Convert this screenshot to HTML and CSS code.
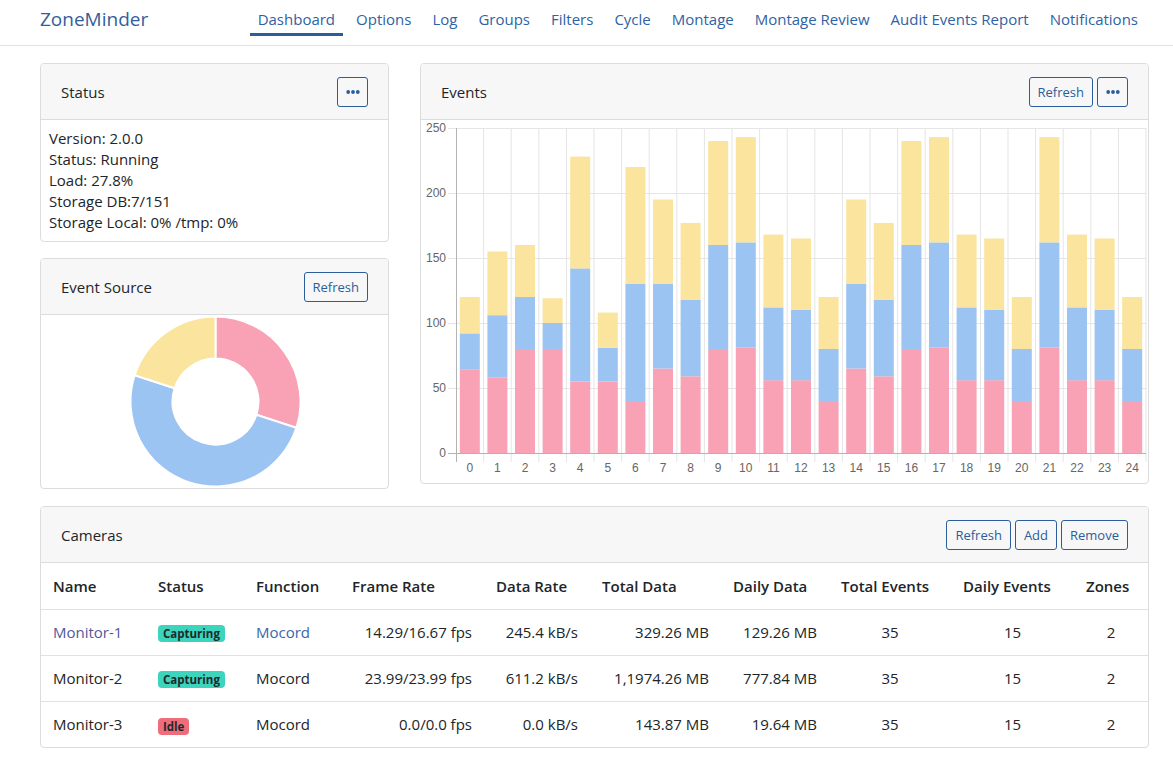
FILE: index.html
```html
<!DOCTYPE html>
<html lang="en">
<head>
<meta charset="utf-8">
<title>ZoneMinder Dashboard</title>
<link rel="stylesheet" href="styles.css">
</head>
<body>
<header class="navbar">
  <a class="brand" href="#">ZoneMinder</a>
  <nav class="nav">
    <a class="nav-link active" href="#">Dashboard</a>
    <a class="nav-link" href="#">Options</a>
    <a class="nav-link" href="#">Log</a>
    <a class="nav-link" href="#">Groups</a>
    <a class="nav-link" href="#">Filters</a>
    <a class="nav-link" href="#">Cycle</a>
    <a class="nav-link" href="#">Montage</a>
    <a class="nav-link" href="#">Montage Review</a>
    <a class="nav-link" href="#">Audit Events Report</a>
    <a class="nav-link" href="#">Notifications</a>
  </nav>
</header>

<main class="content">
  <div class="top-row">
    <div class="left-col">
      <section class="card">
        <div class="card-header">
          <span class="card-title">Status</span>
          <div class="btns">
            <button class="btn btn-icon" type="button"><svg width="14" height="4" viewBox="0 0 14 4"><circle cx="2.2" cy="2" r="1.9" fill="#2c5d9b"/><circle cx="7" cy="2" r="1.9" fill="#2c5d9b"/><circle cx="11.8" cy="2" r="1.9" fill="#2c5d9b"/></svg></button>
          </div>
        </div>
        <div class="status-body">
          <div>Version: 2.0.0</div>
          <div>Status: Running</div>
          <div>Load: 27.8%</div>
          <div>Storage DB:7/151</div>
          <div>Storage Local: 0% /tmp: 0%</div>
        </div>
      </section>

      <section class="card">
        <div class="card-header">
          <span class="card-title">Event Source</span>
          <div class="btns">
            <button class="btn" type="button">Refresh</button>
          </div>
        </div>
        <div class="donut-body">
          <svg class="donut" width="347" height="173" viewBox="0 0 347 173">
            <path d="M174.5,1.5 A85,85 0 0 1 255.34,112.77 L215.40,99.79 A43,43 0 0 0 174.5,43.5 Z" fill="#f9a1b5" stroke="#fff" stroke-width="2"/>
            <path d="M255.34,112.77 A85,85 0 1 1 93.66,60.23 L133.60,73.21 A43,43 0 1 0 215.40,99.79 Z" fill="#9cc4f2" stroke="#fff" stroke-width="2"/>
            <path d="M93.66,60.23 A85,85 0 0 1 174.5,1.5 L174.5,43.5 A43,43 0 0 0 133.60,73.21 Z" fill="#fbe49d" stroke="#fff" stroke-width="2"/>
          </svg>
        </div>
      </section>
    </div>

    <section class="card events-card">
      <div class="card-header">
        <span class="card-title">Events</span>
        <div class="btns">
          <button class="btn" type="button">Refresh</button>
          <button class="btn btn-icon" type="button"><svg width="14" height="4" viewBox="0 0 14 4"><circle cx="2.2" cy="2" r="1.9" fill="#2c5d9b"/><circle cx="7" cy="2" r="1.9" fill="#2c5d9b"/><circle cx="11.8" cy="2" r="1.9" fill="#2c5d9b"/></svg></button>
        </div>
      </div>
      <div class="chart-body">
        <svg class="bar-chart" width="727" height="363" viewBox="0 0 727 363">
          <g stroke="#e5e5e5" stroke-width="1">
            <line x1="27" y1="8.5" x2="725" y2="8.5"/>
            <line x1="27" y1="73.5" x2="725" y2="73.5"/>
            <line x1="27" y1="138.5" x2="725" y2="138.5"/>
            <line x1="27" y1="203.5" x2="725" y2="203.5"/>
            <line x1="27" y1="268.5" x2="725" y2="268.5"/>
            <line x1="62.6" y1="8" x2="62.6" y2="342"/>
            <line x1="90.2" y1="8" x2="90.2" y2="342"/>
            <line x1="117.8" y1="8" x2="117.8" y2="342"/>
            <line x1="145.4" y1="8" x2="145.4" y2="342"/>
            <line x1="173" y1="8" x2="173" y2="342"/>
            <line x1="200.6" y1="8" x2="200.6" y2="342"/>
            <line x1="228.2" y1="8" x2="228.2" y2="342"/>
            <line x1="255.8" y1="8" x2="255.8" y2="342"/>
            <line x1="283.4" y1="8" x2="283.4" y2="342"/>
            <line x1="311" y1="8" x2="311" y2="342"/>
            <line x1="338.6" y1="8" x2="338.6" y2="342"/>
            <line x1="366.2" y1="8" x2="366.2" y2="342"/>
            <line x1="393.8" y1="8" x2="393.8" y2="342"/>
            <line x1="421.4" y1="8" x2="421.4" y2="342"/>
            <line x1="449" y1="8" x2="449" y2="342"/>
            <line x1="476.6" y1="8" x2="476.6" y2="342"/>
            <line x1="504.2" y1="8" x2="504.2" y2="342"/>
            <line x1="531.8" y1="8" x2="531.8" y2="342"/>
            <line x1="559.4" y1="8" x2="559.4" y2="342"/>
            <line x1="587" y1="8" x2="587" y2="342"/>
            <line x1="614.6" y1="8" x2="614.6" y2="342"/>
            <line x1="642.2" y1="8" x2="642.2" y2="342"/>
            <line x1="669.8" y1="8" x2="669.8" y2="342"/>
            <line x1="697.4" y1="8" x2="697.4" y2="342"/>
            <line x1="725" y1="8" x2="725" y2="342"/>
          </g>
          <g transform="translate(0 333) scale(1 -1.3)">
            <g fill="#f9a1b5">
              <rect x="38.8" y="0" width="20" height="64"/>
              <rect x="66.4" y="0" width="20" height="58"/>
              <rect x="94" y="0" width="20" height="80"/>
              <rect x="121.6" y="0" width="20" height="80"/>
              <rect x="149.2" y="0" width="20" height="55"/>
              <rect x="176.8" y="0" width="20" height="55"/>
              <rect x="204.4" y="0" width="20" height="40"/>
              <rect x="232" y="0" width="20" height="65"/>
              <rect x="259.6" y="0" width="20" height="59"/>
              <rect x="287.2" y="0" width="20" height="80"/>
              <rect x="314.8" y="0" width="20" height="81"/>
              <rect x="342.4" y="0" width="20" height="56"/>
              <rect x="370" y="0" width="20" height="56"/>
              <rect x="397.6" y="0" width="20" height="40"/>
              <rect x="425.2" y="0" width="20" height="65"/>
              <rect x="452.8" y="0" width="20" height="59"/>
              <rect x="480.4" y="0" width="20" height="80"/>
              <rect x="508" y="0" width="20" height="81"/>
              <rect x="535.6" y="0" width="20" height="56"/>
              <rect x="563.2" y="0" width="20" height="56"/>
              <rect x="590.8" y="0" width="20" height="40"/>
              <rect x="618.4" y="0" width="20" height="81"/>
              <rect x="646" y="0" width="20" height="56"/>
              <rect x="673.6" y="0" width="20" height="56"/>
              <rect x="701.2" y="0" width="20" height="40"/>
            </g>
            <g fill="#9cc4f2">
              <rect x="38.8" y="64" width="20" height="28"/>
              <rect x="66.4" y="58" width="20" height="48"/>
              <rect x="94" y="80" width="20" height="40"/>
              <rect x="121.6" y="80" width="20" height="20"/>
              <rect x="149.2" y="55" width="20" height="87"/>
              <rect x="176.8" y="55" width="20" height="26"/>
              <rect x="204.4" y="40" width="20" height="90"/>
              <rect x="232" y="65" width="20" height="65"/>
              <rect x="259.6" y="59" width="20" height="59"/>
              <rect x="287.2" y="80" width="20" height="80"/>
              <rect x="314.8" y="81" width="20" height="81"/>
              <rect x="342.4" y="56" width="20" height="56"/>
              <rect x="370" y="56" width="20" height="54"/>
              <rect x="397.6" y="40" width="20" height="40"/>
              <rect x="425.2" y="65" width="20" height="65"/>
              <rect x="452.8" y="59" width="20" height="59"/>
              <rect x="480.4" y="80" width="20" height="80"/>
              <rect x="508" y="81" width="20" height="81"/>
              <rect x="535.6" y="56" width="20" height="56"/>
              <rect x="563.2" y="56" width="20" height="54"/>
              <rect x="590.8" y="40" width="20" height="40"/>
              <rect x="618.4" y="81" width="20" height="81"/>
              <rect x="646" y="56" width="20" height="56"/>
              <rect x="673.6" y="56" width="20" height="54"/>
              <rect x="701.2" y="40" width="20" height="40"/>
            </g>
            <g fill="#fbe49d">
              <rect x="38.8" y="92" width="20" height="28"/>
              <rect x="66.4" y="106" width="20" height="49"/>
              <rect x="94" y="120" width="20" height="40"/>
              <rect x="121.6" y="100" width="20" height="19"/>
              <rect x="149.2" y="142" width="20" height="86"/>
              <rect x="176.8" y="81" width="20" height="27"/>
              <rect x="204.4" y="130" width="20" height="90"/>
              <rect x="232" y="130" width="20" height="65"/>
              <rect x="259.6" y="118" width="20" height="59"/>
              <rect x="287.2" y="160" width="20" height="80"/>
              <rect x="314.8" y="162" width="20" height="81"/>
              <rect x="342.4" y="112" width="20" height="56"/>
              <rect x="370" y="110" width="20" height="55"/>
              <rect x="397.6" y="80" width="20" height="40"/>
              <rect x="425.2" y="130" width="20" height="65"/>
              <rect x="452.8" y="118" width="20" height="59"/>
              <rect x="480.4" y="160" width="20" height="80"/>
              <rect x="508" y="162" width="20" height="81"/>
              <rect x="535.6" y="112" width="20" height="56"/>
              <rect x="563.2" y="110" width="20" height="55"/>
              <rect x="590.8" y="80" width="20" height="40"/>
              <rect x="618.4" y="162" width="20" height="81"/>
              <rect x="646" y="112" width="20" height="56"/>
              <rect x="673.6" y="110" width="20" height="55"/>
              <rect x="701.2" y="80" width="20" height="40"/>
            </g>
          </g>
          <g stroke="#b3b3b3" stroke-width="1">
            <line x1="35.5" y1="8" x2="35.5" y2="342"/>
            <line x1="27" y1="333.5" x2="725" y2="333.5"/>
          </g>
          <g class="axis-text" text-anchor="end">
            <text x="25" y="12">250</text>
            <text x="25" y="77">200</text>
            <text x="25" y="142">150</text>
            <text x="25" y="207">100</text>
            <text x="25" y="272">50</text>
            <text x="25" y="337">0</text>
          </g>
          <g class="axis-text" text-anchor="middle">
            <text x="48.8" y="352">0</text>
            <text x="76.4" y="352">1</text>
            <text x="104" y="352">2</text>
            <text x="131.6" y="352">3</text>
            <text x="159.2" y="352">4</text>
            <text x="186.8" y="352">5</text>
            <text x="214.4" y="352">6</text>
            <text x="242" y="352">7</text>
            <text x="269.6" y="352">8</text>
            <text x="297.2" y="352">9</text>
            <text x="324.8" y="352">10</text>
            <text x="352.4" y="352">11</text>
            <text x="380" y="352">12</text>
            <text x="407.6" y="352">13</text>
            <text x="435.2" y="352">14</text>
            <text x="462.8" y="352">15</text>
            <text x="490.4" y="352">16</text>
            <text x="518" y="352">17</text>
            <text x="545.6" y="352">18</text>
            <text x="573.2" y="352">19</text>
            <text x="600.8" y="352">20</text>
            <text x="628.4" y="352">21</text>
            <text x="656" y="352">22</text>
            <text x="683.6" y="352">23</text>
            <text x="711.2" y="352">24</text>
          </g>
        </svg>
      </div>
    </section>
  </div>

  <section class="card cameras-card">
    <div class="card-header">
      <span class="card-title">Cameras</span>
      <div class="btns">
        <button class="btn" type="button">Refresh</button>
        <button class="btn" type="button">Add</button>
        <button class="btn" type="button">Remove</button>
      </div>
    </div>
    <table class="cam-table">
      <colgroup>
        <col class="c-name"><col class="c-status"><col class="c-func"><col class="c-fps"><col class="c-rate">
        <col class="c-total"><col class="c-daily"><col class="c-tev"><col class="c-dev"><col class="c-zones">
      </colgroup>
      <thead>
        <tr>
          <th>Name</th><th>Status</th><th>Function</th><th>Frame Rate</th><th>Data Rate</th>
          <th>Total Data</th><th>Daily Data</th><th>Total Events</th><th>Daily Events</th><th>Zones</th>
        </tr>
      </thead>
      <tbody>
        <tr>
          <td><a class="mon-link" href="#">Monitor-1</a></td>
          <td><span class="badge badge-ok">Capturing</span></td>
          <td><a class="func-link" href="#">Mocord</a></td>
          <td class="num">14.29/16.67 fps</td>
          <td class="num">245.4 kB/s</td>
          <td class="num">329.26 MB</td>
          <td class="num">129.26 MB</td>
          <td class="mid">35</td>
          <td class="mid">15</td>
          <td class="mid">2</td>
        </tr>
        <tr>
          <td>Monitor-2</td>
          <td><span class="badge badge-ok">Capturing</span></td>
          <td>Mocord</td>
          <td class="num">23.99/23.99 fps</td>
          <td class="num">611.2 kB/s</td>
          <td class="num">1,1974.26 MB</td>
          <td class="num">777.84 MB</td>
          <td class="mid">35</td>
          <td class="mid">15</td>
          <td class="mid">2</td>
        </tr>
        <tr>
          <td>Monitor-3</td>
          <td><span class="badge badge-idle">Idle</span></td>
          <td>Mocord</td>
          <td class="num">0.0/0.0 fps</td>
          <td class="num">0.0 kB/s</td>
          <td class="num">143.87 MB</td>
          <td class="num">19.64 MB</td>
          <td class="mid">35</td>
          <td class="mid">15</td>
          <td class="mid">2</td>
        </tr>
      </tbody>
    </table>
  </section>
</main>
</body>
</html>
```

FILE: styles.css
```css
* { box-sizing: border-box; }

body {
  margin: 0;
  background: #fff;
  color: #212529;
  font-family: "Open Sans", "Noto Sans", sans-serif;
  font-size: 15px;
}

a { text-decoration: none; }

/* ---------- navbar ---------- */
.navbar {
  display: flex;
  align-items: flex-start;
  height: 46px;
  padding: 0 27px 0 40px;
  border-bottom: 1px solid #dee2e6;
}

.brand {
  padding-top: 6px;
  font-size: 19px;
  line-height: 26px;
  color: #33609b;
}

.nav {
  display: flex;
  gap: 5px;
  margin-left: auto;
}

.nav-link {
  height: 36px;
  padding: 8px 8px 0;
  line-height: 22px;
  color: #2f62a3;
  border-bottom: 3px solid transparent;
}

.nav-link.active { border-bottom-color: #2c5d9b; }

/* ---------- layout ---------- */
.content { padding: 17px 24px 20px 40px; }

.top-row {
  display: grid;
  grid-template-columns: 349px 729px;
  gap: 31px;
  align-items: start;
}

.left-col {
  display: flex;
  flex-direction: column;
  gap: 16px;
}

/* ---------- cards ---------- */
.card {
  background: #fff;
  border: 1px solid #dcdcdc;
  border-radius: 4px;
  overflow: hidden;
}

.card-header {
  display: flex;
  align-items: center;
  justify-content: space-between;
  height: 56px;
  padding: 0 20px;
  background: #f7f7f7;
  border-bottom: 1px solid #dcdcdc;
}

.card-title { line-height: 22px; }

.btns {
  display: flex;
  gap: 4px;
}

.btn {
  height: 30px;
  padding: 0 8px;
  border: 1px solid #2c5d9b;
  border-radius: 3px;
  background: transparent;
  color: #2c5d9b;
  font-family: "Open Sans", "Noto Sans", sans-serif;
  font-size: 13px;
  line-height: 28px;
}

.btn-icon {
  display: flex;
  align-items: center;
  justify-content: center;
  width: 31px;
  padding: 0;
}

.status-body {
  padding: 8px;
  line-height: 21px;
}

.donut-body { height: 173px; }
.donut { display: block; }

.events-card { height: 421px; }
.chart-body { height: 363px; }
.bar-chart { display: block; }

.axis-text text {
  font-family: "Liberation Sans", Arial, sans-serif;
  font-size: 12px;
  fill: #666;
}

/* ---------- cameras ---------- */
.cameras-card { margin-top: 17px; }

.cam-table {
  width: 100%;
  border-collapse: collapse;
  table-layout: fixed;
}

.c-name { width: 105px; }
.c-status { width: 98px; }
.c-func { width: 96px; }
.c-fps { width: 144px; }
.c-rate { width: 106px; }
.c-total { width: 131px; }
.c-daily { width: 108px; }
.c-tev { width: 122px; }
.c-dev { width: 123px; }
.c-zones { width: 74px; }

.cam-table th,
.cam-table td {
  height: 46px;
  padding: 0 12px;
  line-height: 22px;
  white-space: nowrap;
  vertical-align: middle;
}

.cam-table th {
  text-align: left;
  font-weight: 600;
  border-bottom: 1px solid #dee2e6;
}

.cam-table tbody tr + tr td { border-top: 1px solid #dee2e6; }

.cam-table td.num { text-align: right; }
.cam-table td.mid { text-align: center; }

.mon-link { color: #52599a; }
.func-link { color: #3a67a8; }

.badge {
  display: inline-block;
  padding: 0 5px;
  border-radius: 4px;
  font-size: 11.5px;
  font-weight: 700;
  line-height: 17px;
  color: #1c2a2a;
  vertical-align: middle;
}

.badge-ok { background: #3cd4bd; }
.badge-idle { background: #ef6c7b; }
```
